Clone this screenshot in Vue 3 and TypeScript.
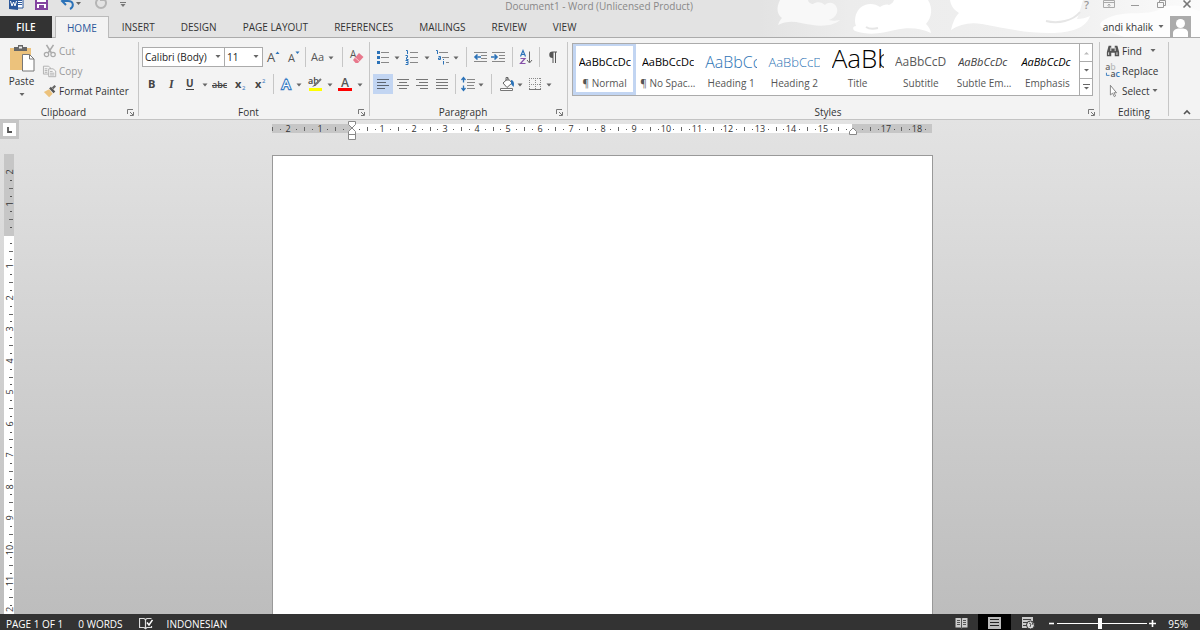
<script setup lang="ts">
import { ref } from 'vue'

interface Tool {
  id: string
  label: string
  w: number
  active?: boolean
}

const icons: Record<string, string> = {
  caret: '<path d="M5.5 7.500h5L8 10.500z" fill="#666"/>',
  grow: '<text x="2" y="13" font-size="13" fill="#555">A</text><path d="M10.500 5l2-2.500 2 2.500z" fill="#2b72b8"/>',
  shrink: '<text x="3" y="13" font-size="11" fill="#555">A</text><path d="M10.500 2.500h4l-2 2.500z" fill="#2b72b8"/>',
  aa: '<text x="1" y="12" font-size="11" fill="#555">Aa</text>',
  eraser: '<text x="1" y="9" font-size="10" fill="#555">A</text><path d="M4 11l6-7 4.500 4L9 14H6.500z" fill="#e8788c"/><path d="M6 8.500l4.500 4" stroke="#f8dde1" stroke-width=".8"/>',
  bold: '<text x="4" y="12" font-size="11" font-weight="700" fill="#444">B</text>',
  italic: '<text x="6" y="12" font-size="12" font-weight="700" font-style="italic" font-family="Liberation Serif" fill="#444">I</text>',
  underline: '<text x="4" y="11" font-size="10" font-weight="700" fill="#444">U</text><path d="M4 13.500h8" stroke="#444"/>',
  strike: '<text x="0" y="12" font-size="9" font-weight="600" fill="#444">abc</text><path d="M0 9.500h15" stroke="#444"/>',
  sub: '<text x="3" y="12" font-size="11" font-weight="700" fill="#444">x</text><text x="10" y="14" font-size="6" fill="#2b72b8">2</text>',
  sup: '<text x="3" y="12" font-size="11" font-weight="700" fill="#444">x</text><text x="10" y="7" font-size="6" fill="#2b72b8">2</text>',
  effects: '<text x="4" y="13" font-size="13" fill="#fff" stroke="#3b7dc4" stroke-width="2.400" paint-order="stroke">A</text>',
  highlight: '<text x="1" y="8" font-size="9" font-weight="600" fill="#444">ab</text><path d="M14 3L8 9" stroke="#777" stroke-width="2"/><path d="M5 11l3-3 1 1.500z" fill="#555"/><path d="M2 12h13v3H2z" fill="#ff0"/>',
  color: '<text x="4" y="11" font-size="12" font-weight="600" fill="#555">A</text><path d="M1 12h14v3H1z" fill="#f00"/>',
  bullets: '<path d="M6 3.500h8M6 8.500h8M6 13.500h8" stroke="#888"/><path d="M2 2h3v3H2zM2 7h3v3H2zM2 12h3v3H2z" fill="#2b72b8"/>',
  numbers: '<path d="M6 3.500h8M6 8.500h8M6 13.500h8" stroke="#888"/><path d="M2 1.500h1.500V5M1.500 6.500h2v2h-1v2h2M1.500 11.500h2.500v4H1.500M2 13.500h2" fill="none" stroke="#2b72b8"/>',
  multi: '<path d="M5 3.500h9M8 8.500h7M12 13.500h3" stroke="#888"/><path d="M2 1.500h1.500V5M4.500 7.500h2v3h-2v-1.500h2M9.500 12v3.500M9.500 10v1" fill="none" stroke="#2b72b8"/>',
  outdent: '<path d="M1 3.500h13M8 6.500h6M8 9.500h6M1 12.500h13" stroke="#888"/><path d="M8 8H2M4.500 5.500L2 8l2.500 2.500" fill="none" stroke="#2b72b8" stroke-width="1.600"/>',
  indent: '<path d="M1 3.500h13M8 6.500h6M8 9.500h6M1 12.500h13" stroke="#888"/><path d="M0 8h6M3.500 5.500L6 8l-2.500 2.500" fill="none" stroke="#2b72b8" stroke-width="1.600"/>',
  sort: '<path d="M2.500 7.500L5 1.500l2.500 6M3.500 5.500h3" fill="none" stroke="#2b72b8" stroke-width="1.200"/><path d="M2.500 9.500H7l-4.500 5h5" fill="none" stroke="#8651a8" stroke-width="1.200"/><path d="M11.500 2.500v11M9 11l2.500 3 2.500-3" fill="none" stroke="#666"/>',
  pilcrow: '<path d="M7.500 9a3 3 0 010-6.500H12v1h-1V14h-1V3.500H8.500V14h-1V9z" fill="#555"/>',
  left: '<path d="M2 3.500h12M2 6.500h9M2 9.500h12M2 12.500h8" stroke="#5c6470"/>',
  center: '<path d="M2 3.500h12M4 6.500h8M2 9.500h12M4 12.500h8" stroke="#777"/>',
  right: '<path d="M2 3.500h12M5 6.500h9M2 9.500h12M6 12.500h8" stroke="#777"/>',
  justify: '<path d="M2 3.500h12M2 6.500h12M2 9.500h12M2 12.500h12" stroke="#777"/>',
  spacing: '<path d="M7 3.500h8M7 6.500h8M7 9.500h7M7 12.500h8" stroke="#888"/><path d="M3.500 2v4.500M3.500 9.500V14M1.500 4l2-2.500 2 2.500M1.500 12l2 2.500 2-2.500" fill="none" stroke="#2b72b8" stroke-width="1.300"/>',
  shading: '<path d="M4 7l5-4.500 4 4.500-5 4.500z" fill="#fff" stroke="#666"/><path d="M7 5V1.500h2V5" fill="none" stroke="#666"/><path d="M12 4c3 0 3.500 4 2.500 7L12 8z" fill="#2b72b8"/><path d="M1.500 12.500h12v2h-12z" fill="#fff" stroke="#777"/>',
  borders: '<path d="M2 2.500h12M2 8.500h12M2.500 2v12M8.500 2v12M13.500 2v12" stroke="#888" stroke-dasharray="1 1" fill="none"/><path d="M2 13.500h12" stroke="#777"/>',
  cut: '<path d="M4 1l5.500 9M12 1L6 10" stroke="#aaa" stroke-width="1.800"/><circle cx="4" cy="12" r="2.500" fill="none" stroke="#aaa" stroke-width="1.400"/><circle cx="11.500" cy="12" r="2.500" fill="none" stroke="#aaa" stroke-width="1.400"/>',
  copy: '<path d="M.5 2.500h6l2 2v7h-8z" fill="#f3f3f3" stroke="#aaa"/><path d="M2 5.500h3M2 7.500h3M2 9.500h3" stroke="#aaa"/><path d="M6.500 5.500h5l3 2.500v6.500h-8z" fill="#f6f6f6" stroke="#aaa"/><path d="M8 8.500h3M8 10.500h5M8 12.500h5" stroke="#aaa"/>',
  painter: '<path d="M1 9l6-3 4 5-4 4z" fill="#ecc27c"/><path d="M7 5l2-2 5 5.500-2 2z" fill="#555"/><path d="M11 5l3-3" stroke="#666" stroke-width="2.500"/>',
  find: '<path d="M3 2h3v3h4V2h3l2 7v5h-5v-4H6v4H1V9z" fill="#555"/><path d="M3 9.500v3M12.500 9.500v3M5.500 4v4M10.500 4v4" stroke="#eee"/>',
  replace: '<text x="-1" y="7" font-size="10" font-weight="600" fill="#666">a<tspan fill="#bbb">b</tspan></text><text x="5" y="15" font-size="10" font-weight="600" fill="#555">a<tspan fill="#2b72b8">c</tspan></text><path d="M.5 10v3H4" fill="none" stroke="#2b72b8"/>',
  select: '<path d="M5 1.500v11l2.500-2 2 4 1.500-1-2-3.500H12z" fill="#fff" stroke="#777"/>',
}

const fontRow1: Tool[] = [
  { id: 'grow', label: 'Increase font size', w: 20 },
  { id: 'shrink', label: 'Decrease font size', w: 19 },
  { id: '|', label: '', w: 6 },
  { id: 'aa', label: 'Change case', w: 19 },
  { id: 'caret', label: 'Change case options', w: 8 },
  { id: '|', label: '', w: 14 },
  { id: 'eraser', label: 'Clear formatting', w: 15 },
]
const fontRow2: Tool[] = [
  { id: 'bold', label: 'Bold', w: 19 },
  { id: 'italic', label: 'Italic', w: 19 },
  { id: 'underline', label: 'Underline', w: 20 },
  { id: 'caret', label: 'Underline style', w: 10 },
  { id: 'strike', label: 'Strikethrough', w: 20 },
  { id: 'sub', label: 'Subscript', w: 20 },
  { id: 'sup', label: 'Superscript', w: 19 },
  { id: '|', label: '', w: 8 },
  { id: 'effects', label: 'Text effects', w: 18 },
  { id: 'caret', label: 'Text effect options', w: 8 },
  { id: 'highlight', label: 'Highlight colour', w: 23 },
  { id: 'caret', label: 'Highlight colour options', w: 8 },
  { id: 'color', label: 'Font colour', w: 22 },
  { id: 'caret', label: 'Font colour options', w: 8 },
]
const paraRow1: Tool[] = [
  { id: 'bullets', label: 'Bullets', w: 20 },
  { id: 'caret', label: 'Bullet options', w: 8 },
  { id: 'numbers', label: 'Numbering', w: 22 },
  { id: 'caret', label: 'Numbering options', w: 8 },
  { id: 'multi', label: 'Multilevel list', w: 21 },
  { id: 'caret', label: 'Multilevel list options', w: 8 },
  { id: '|', label: '', w: 12 },
  { id: 'outdent', label: 'Decrease indent', w: 18 },
  { id: 'indent', label: 'Increase indent', w: 18 },
  { id: '|', label: '', w: 9 },
  { id: 'sort', label: 'Sort', w: 18 },
  { id: '|', label: '', w: 8 },
  { id: 'pilcrow', label: 'Show formatting marks', w: 20 },
]
const paraRow2: Tool[] = [
  { id: 'left', label: 'Align left', w: 20, active: true },
  { id: 'center', label: 'Centre', w: 19 },
  { id: 'right', label: 'Align right', w: 20 },
  { id: 'justify', label: 'Justify', w: 20 },
  { id: '|', label: '', w: 6 },
  { id: 'spacing', label: 'Line spacing', w: 19 },
  { id: 'caret', label: 'Line spacing options', w: 8 },
  { id: '|', label: '', w: 12 },
  { id: 'shading', label: 'Shading', w: 19 },
  { id: 'caret', label: 'Shading options', w: 8 },
  { id: 'borders', label: 'Borders', w: 21 },
  { id: 'caret', label: 'Border options', w: 8 },
]

const tabs = ['HOME', 'INSERT', 'DESIGN', 'PAGE LAYOUT', 'REFERENCES', 'MAILINGS', 'REVIEW', 'VIEW']

const styles = [
  { name: '¶ Normal', sample: 'AaBbCcDc', cls: 'normal' },
  { name: '¶ No Spac...', sample: 'AaBbCcDc', cls: 'normal' },
  { name: 'Heading 1', sample: 'AaBbCc', cls: 'h1' },
  { name: 'Heading 2', sample: 'AaBbCcD', cls: 'h2' },
  { name: 'Title', sample: 'AaBb', cls: 'title' },
  { name: 'Subtitle', sample: 'AaBbCcD', cls: 'subtitle' },
  { name: 'Subtle Em...', sample: 'AaBbCcDc', cls: 'subtle' },
  { name: 'Emphasis', sample: 'AaBbCcDc', cls: 'emphasis' },
]

const UNIT = 31.45

interface Mark {
  pos: number
  kind: 'num' | 'half' | 'dot'
  text: string
}

function marks(from: number, to: number, skip: number[]): Mark[] {
  const list: Mark[] = []
  for (let q = from; q <= to; q++) {
    if (q === 0 || skip.includes(q)) continue
    const pos = Math.round((q * UNIT) / 4)
    if (q % 4 === 0) list.push({ pos, kind: 'num', text: String(Math.abs(q / 4)) })
    else list.push({ pos, kind: q % 2 === 0 ? 'half' : 'dot', text: '' })
  }
  return list
}

const hMarks = marks(-10, 73, [64])
const vMarks = marks(-8, 48, [])
const zoomLevel = ref(95)
const fontName = ref('Calibri (Body)')
const fontSize = ref('11')
</script>

<template>
  <div class="word">
    <header class="top">
      <svg class="clouds" viewBox="0 0 440 37" aria-hidden="true">
        <defs>
          <linearGradient id="fade"><stop offset="0" stop-color="#e3e3e3" /><stop offset=".2" stop-color="#ececec" /><stop offset=".7" stop-color="#f0f0f0" /><stop offset="1" stop-color="#fbfbfb" /></linearGradient>
        </defs>
        <path d="M0 0h440v37H0z" fill="url(#fade)" />
        <path fill="#f8f8f8" d="M20 0C16 8 17 14 22 18c-2 2-3 4-4 7 8-4 15-4 23-2 14 3 30 5 39-3-5 1-8 1-11 0 8-3 10-9 7-14-3-4-8-4-11-1-3-3-8-4-12-1-2 0-5-2-5-4z" />
        <path fill="#fff" d="M134 0c-1 3-3 4-5 5-3-1-6 0-9 2-6-4-14-4-20 1-5 5-6 13-4 18-3 0-4 3-1 5 15 5 28 2 40-1 13-3 26-2 36 3-1-5-3-7-5-9 6-7 7-16 2-24z" />
        <path fill="#fff" d="M190 0c1 6 4 10 9 13-4 4-6 9-8 17 9-6 19-8 31-6 23 4 42 9 68 9 21 0 36-5 40-17-4 2-8 3-13 3 2-5 4-12 6-19z" />
        <path d="M106 27c3 2 8 2 12 1M286 21c12 3 27 0 34-9" fill="none" stroke="#e6e6e6" stroke-width="2" />
        <path fill="#fdfdfd" d="M344 20c20-12 42-2 58-12 13-6 28 0 38 3v26h-75c-20-6-31-11-21-17z" />
      </svg>
      <div class="titlebar">
        <div class="quick">
          <svg width="15" height="14" viewBox="0 0 15 14"><path d="M7 1h7v11H7z" fill="#fff" stroke="#2b579a" /><path d="M9 4.500h4M9 6.500h4M9 8.500h4" stroke="#2b579a" /><path d="M0 1l9-1v14l-9-1z" fill="#2b579a" /><path d="M1.500 5l1.500 5 1.500-4L6 10l1.500-5" fill="none" stroke="#fff" /></svg>
          <button type="button" aria-label="Save"><svg width="13" height="14" viewBox="0 0 13 14"><path d="M1 0h11v13H1z" fill="#fff" stroke="#8443a0" stroke-width="2" /><path d="M2 7h9" stroke="#8443a0" stroke-width="2" /><path d="M4 9h5v4H4z" fill="#8443a0" /></svg></button>
          <button type="button" class="undo" aria-label="Undo"><svg width="22" height="14" viewBox="0 0 22 14"><path d="M2 5h6c6 0 6 6 2 8M6 1L2 5l4 4" fill="none" stroke="#2b72b8" stroke-width="2" /><path d="M16 6h5l-2.500 3z" fill="#666" /></svg></button>
          <button type="button" class="redo" aria-label="Repeat"><svg width="14" height="14" viewBox="0 0 14 14"><path d="M4 3a5 5 0 106 0M10 0v4H6" fill="none" stroke="#b5b5b5" stroke-width="2" /></svg></button>
          <button type="button" class="more" aria-label="Customise toolbar"><svg width="6" height="14" viewBox="0 0 6 14"><path d="M0 6.500h6" stroke="#777" /><path d="M.5 8h5L3 11z" fill="#777" /></svg></button>
        </div>
        <div class="doc-title">Document1 - Word (Unlicensed Product)</div>
        <div class="window-tools">
          <button type="button" aria-label="Help" class="help">?</button>
          <button type="button" aria-label="Ribbon display options"><svg width="12" height="12" viewBox="0 0 12 12"><path d="M.5 .5h11v7H.5zM1 2.500h10M6 7V4M4.500 5.500L6 4l1.500 1.500" fill="none" stroke="#aaa" /></svg></button>
          <button type="button" aria-label="Minimise"><svg width="12" height="12" viewBox="0 0 12 12"><path d="M2 5.500h8" stroke="#999" /></svg></button>
          <button type="button" aria-label="Restore"><svg width="12" height="12" viewBox="0 0 12 12"><path d="M2.500 2.500h6v5h-6zM4.500 2V.5h6v5H9" fill="none" stroke="#999" /></svg></button>
          <button type="button" aria-label="Close"><svg width="12" height="12" viewBox="0 0 12 12"><path d="M2.500 .5l7 7M9.500 .5l-7 7" stroke="#777" stroke-width="1.600" /></svg></button>
        </div>
      </div>
      <nav class="tabs">
        <button type="button" class="file">FILE</button>
        <button v-for="(t, i) in tabs" :key="t" type="button" class="tab" :class="{ current: i === 0 }">{{ t }}</button>
        <button type="button" class="account">andi khalik <svg width="6" height="4" viewBox="0 0 6 4"><path d="M.5 0h5L3 3z" fill="#666" /></svg></button>
        <svg class="avatar" width="21" height="21" viewBox="0 0 21 21"><path d="M0 0h21v21H0z" fill="#ababab" /><circle cx="10.500" cy="7.500" r="4.500" fill="#fff" /><path d="M3 21v-4c0-3 3-4 5-4.500h5c3 .5 5 1.500 5 4.500v4z" fill="#fff" /></svg>
      </nav>
    </header>

    <section class="ribbon">
      <div class="group clipboard">
        <div class="body">
          <button type="button" class="paste">
            <svg width="26" height="28" viewBox="0 0 26 28"><path d="M1 4h21v22H1z" fill="#ecc27c" /><path d="M5 3h4V1h5v2h4v4H5z" fill="#666" /><path d="M10 2.500h3v2h-3z" fill="#eee" /><path d="M13.500 10.500h7l4.500 4.500v12H13.500z" fill="#fff" stroke="#777" /><path d="M20.500 10.500V15H25" fill="none" stroke="#777" /></svg>
            <span>Paste</span>
            <svg width="6" height="4" viewBox="0 0 6 4"><path d="M.5 0h5L3 3z" fill="#666" /></svg>
          </button>
          <div class="stack">
            <button type="button" class="dim"><svg width="14" height="14" viewBox="0 0 16 16" v-html="icons.cut" />Cut</button>
            <button type="button" class="dim"><svg width="14" height="14" viewBox="0 0 16 16" v-html="icons.copy" />Copy</button>
            <button type="button"><svg width="14" height="14" viewBox="0 0 16 16" v-html="icons.painter" />Format Painter</button>
          </div>
        </div>
        <footer><span>Clipboard</span><button type="button" class="launch" aria-label="Clipboard settings"><svg width="7" height="7" viewBox="0 0 7 7"><path d="M.5 5V.5H6M3 3l3 3M6.500 3v3.500H3" fill="none" stroke="#777" /></svg></button></footer>
      </div>

      <div class="group font">
        <div class="rows">
          <div class="row">
            <label class="combo name"><select v-model="fontName" aria-label="Font"><option>Calibri (Body)</option></select><svg width="6" height="4" viewBox="0 0 6 4"><path d="M.5 0h5L3 3z" fill="#666" /></svg></label>
            <label class="combo size"><select v-model="fontSize" aria-label="Font size"><option>11</option></select><svg width="6" height="4" viewBox="0 0 6 4"><path d="M.5 0h5L3 3z" fill="#666" /></svg></label>
            <template v-for="(t, i) in fontRow1" :key="i">
              <i v-if="t.id === '|'" class="sep" :style="{ width: t.w + 'px' }" />
              <button v-else type="button" class="tool" :aria-label="t.label" :style="{ width: t.w + 'px' }"><svg width="16" height="16" viewBox="0 0 16 16" v-html="icons[t.id]" /></button>
            </template>
          </div>
          <div class="row">
            <template v-for="(t, i) in fontRow2" :key="i">
              <i v-if="t.id === '|'" class="sep" :style="{ width: t.w + 'px' }" />
              <button v-else type="button" class="tool" :aria-label="t.label" :style="{ width: t.w + 'px' }"><svg width="16" height="16" viewBox="0 0 16 16" v-html="icons[t.id]" /></button>
            </template>
          </div>
        </div>
        <footer><span>Font</span><button type="button" class="launch" aria-label="Font settings"><svg width="7" height="7" viewBox="0 0 7 7"><path d="M.5 5V.5H6M3 3l3 3M6.500 3v3.500H3" fill="none" stroke="#777" /></svg></button></footer>
      </div>

      <div class="group paragraph">
        <div class="rows">
          <div v-for="(r, k) in [paraRow1, paraRow2]" :key="k" class="row">
            <template v-for="(t, i) in r" :key="i">
              <i v-if="t.id === '|'" class="sep" :style="{ width: t.w + 'px' }" />
              <button v-else type="button" class="tool" :class="{ active: t.active }" :aria-label="t.label" :style="{ width: t.w + 'px' }"><svg width="16" height="16" viewBox="0 0 16 16" v-html="icons[t.id]" /></button>
            </template>
          </div>
        </div>
        <footer><span>Paragraph</span><button type="button" class="launch" aria-label="Paragraph settings"><svg width="7" height="7" viewBox="0 0 7 7"><path d="M.5 5V.5H6M3 3l3 3M6.500 3v3.500H3" fill="none" stroke="#777" /></svg></button></footer>
      </div>

      <div class="group styles">
        <div class="gallery">
          <button v-for="(s, i) in styles" :key="s.name" type="button" class="style" :class="{ chosen: i === 0 }">
            <span class="sample" :class="s.cls">{{ s.sample }}</span>
            <span class="style-name">{{ s.name }}</span>
          </button>
          <div class="scroller">
            <button type="button" aria-label="Previous styles"><svg width="7" height="6" viewBox="0 0 7 6"><path d="M1 4.500h5L3.500 2z" fill="#bbb" /></svg></button>
            <button type="button" aria-label="Next styles"><svg width="7" height="6" viewBox="0 0 7 6"><path d="M1 2h5L3.500 4.500z" fill="#666" /></svg></button>
            <button type="button" aria-label="All styles"><svg width="7" height="6" viewBox="0 0 7 6"><path d="M0 .5h7" stroke="#666" /><path d="M1 3h5L3.500 5.500z" fill="#666" /></svg></button>
          </div>
        </div>
        <footer><span>Styles</span><button type="button" class="launch" aria-label="Style settings"><svg width="7" height="7" viewBox="0 0 7 7"><path d="M.5 5V.5H6M3 3l3 3M6.500 3v3.500H3" fill="none" stroke="#777" /></svg></button></footer>
      </div>

      <div class="group editing">
        <div class="stack">
          <button type="button"><svg width="14" height="14" viewBox="0 0 16 16" v-html="icons.find" />Find<svg class="gap" width="6" height="4" viewBox="0 0 6 4"><path d="M.5 0h5L3 3z" fill="#666" /></svg></button>
          <button type="button"><svg width="14" height="14" viewBox="0 0 16 16" v-html="icons.replace" />Replace</button>
          <button type="button"><svg width="14" height="14" viewBox="0 0 16 16" v-html="icons.select" />Select<svg width="6" height="4" viewBox="0 0 6 4"><path d="M.5 0h5L3 3z" fill="#666" /></svg></button>
        </div>
        <footer><span>Editing</span></footer>
      </div>
      <button type="button" class="collapse" aria-label="Collapse the ribbon"><svg width="8" height="6" viewBox="0 0 8 6"><path d="M1 5l3-3 3 3" fill="none" stroke="#555" stroke-width="1.600" /></svg></button>
    </section>

    <main class="work">
      <div class="side">
        <button type="button" class="tabstop" aria-label="Tab selector"><svg width="13" height="13" viewBox="0 0 13 13"><path d="M0 0h13v13H0z" fill="#fff" /><path d="M5 4v5h4" fill="none" stroke="#555" stroke-width="1.800" /></svg></button>
        <svg class="vruler" width="10" height="462" viewBox="0 0 10 462">
          <path d="M0 0h10v462H0z" fill="#fff" /><path d="M0 0h10v82H0z" fill="#c6c6c6" />
          <g transform="translate(0 81)">
            <template v-for="m in vMarks" :key="m.pos">
              <text v-if="m.kind === 'num'" :transform="`translate(9 ${m.pos}) rotate(-90)`" text-anchor="middle">{{ m.text }}</text>
              <path v-else-if="m.kind === 'half'" :d="`M5 ${m.pos + 0.5}h4`" stroke="#666" />
              <path v-else :d="`M6 ${m.pos + 0.5}h2`" stroke="#555" />
            </template>
          </g>
        </svg>
      </div>
      <div class="canvas">
        <svg class="hruler" width="662" height="20" viewBox="0 0 662 20">
          <path d="M0 4h660v9H0z" fill="#c6c6c6" /><path d="M80 4h500v9H80z" fill="#fff" />
          <g transform="translate(79 0)">
            <template v-for="m in hMarks" :key="m.pos">
              <text v-if="m.kind === 'num'" :x="m.pos" y="12" text-anchor="middle">{{ m.text }}</text>
              <path v-else-if="m.kind === 'half'" :d="`M${m.pos + 0.5} 7v4`" stroke="#666" />
              <path v-else :d="`M${m.pos} 9.500h1`" stroke="#555" />
            </template>
          </g>
          <path d="M76.500 1.500h7v3L80 8l3.500 3.500v8h-7v-8L80 8l-3.500-3.500zM76.500 14.500h7" fill="#fff" stroke="#888" />
          <path d="M577.500 14.500v-3L581 8l3.500 3.500v3z" fill="#fff" stroke="#888" />
        </svg>
        <article class="page" aria-label="Document page"></article>
      </div>
    </main>

    <footer class="status">
      <span class="pages">PAGE 1 OF 1</span>
      <span class="words">0 WORDS</span>
      <svg class="proof" width="14" height="13" viewBox="0 0 14 13"><path d="M6.500 11V2.500L5 1.500H.5v9H5l1.500 1.200L8 10.500h4.500V9M6.500 2.500L8 1.500h4.500" fill="none" stroke="#ddd" stroke-width="1.200" /><path d="M8 5.500l2 2.500 3.500-5" fill="none" stroke="#fff" stroke-width="1.500" /></svg>
      <span>INDONESIAN</span>
      <div class="views">
        <button type="button" aria-label="Read mode"><svg width="13" height="12" viewBox="0 0 13 12"><path d="M.5 1h5l1 1 1-1h5v9.500h-5l-1 1-1-1h-5z" fill="#ccc" /><path d="M6.500 1v10M2 3.500h3M2 5.500h3M2 7.500h3M8 3.500h3M8 5.500h3M8 7.500h3" stroke="#555" /></svg></button>
        <button type="button" class="on" aria-label="Print layout"><svg width="13" height="12" viewBox="0 0 13 12"><path d="M0 0h13v12H0z" fill="#bbb" /><path d="M2 2.500h9M2 5.500h9M2 8.500h9" stroke="#222" /></svg></button>
        <button type="button" aria-label="Web layout"><svg width="14" height="12" viewBox="0 0 14 12"><path d="M1 0h11v11H1z" fill="#ccc" /><path d="M2 2.500h8M2 5.500h5M2 8.500h4" stroke="#444" /><circle cx="9.500" cy="8" r="4" fill="#ddd" stroke="#333" /><path d="M8 6l2 1-1 3M11 5l1 3" fill="none" stroke="#555" /></svg></button>
      </div>
      <div class="zoom">
        <button type="button" aria-label="Zoom out"><svg width="7" height="7" viewBox="0 0 7 7"><path d="M1 3.500h5" stroke="#fff" stroke-width="1.600" /></svg></button>
        <input v-model.number="zoomLevel" type="range" min="10" max="190" aria-label="Zoom" />
        <button type="button" aria-label="Zoom in"><svg width="7" height="7" viewBox="0 0 7 7"><path d="M0 3.500h7M3.500 0v7" stroke="#fff" stroke-width="1.600" /></svg></button>
        <output>{{ zoomLevel }}%</output>
      </div>
    </footer>
  </div>
</template>

<style>
html,
body {
  height: 100%;
  overflow: hidden;
}
</style>

<style scoped>
.word {
  display: flex;
  flex-direction: column;
  height: 100vh;
  overflow: hidden;
  font: 10px/14px 'Open Sans', 'Noto Sans', sans-serif;
  color: #333;
}
.word *,
.word *::before {
  box-sizing: border-box;
}
button {
  padding: 0;
  border: 0;
  background: none;
  color: inherit;
  font: inherit;
}
svg {
  display: block;
  flex: none;
}
.top {
  position: relative;
  flex: none;
  height: 38px;
  background: #e3e3e3;
  border-bottom: 1px solid #ababab;
}
.clouds {
  position: absolute;
  top: 0;
  right: 0;
  width: 440px;
  height: 37px;
}
.titlebar,
.tabs {
  position: relative;
  display: flex;
}
.titlebar {
  height: 16px;
  align-items: flex-start;
  justify-content: space-between;
}
.quick {
  display: flex;
  width: 240px;
  height: 10px;
  padding-left: 9px;
  align-items: flex-end;
}
.quick button {
  margin-left: 11px;
}
.quick .undo {
  margin-left: 12px;
}
.quick .redo {
  margin-left: 12px;
}
.quick .more {
  margin-left: 12px;
}
.doc-title {
  line-height: 12px;
  color: #888;
}
.window-tools {
  display: flex;
  width: 242px;
  padding-right: 7px;
  gap: 14px;
  justify-content: flex-end;
  align-items: flex-start;
}
.help {
  font-size: 11px;
  font-weight: 600;
  line-height: 10px;
  color: #999;
}
.tabs {
  height: 22px;
}
.file {
  width: 52px;
  background: #333;
  color: #fff;
  height: 22px;
  font-weight: 600;
}
.tab {
  padding: 0 13px;
}
.tab.current {
  margin-left: 3px;
  padding: 0 11px;
  background: #f3f3f3;
  border: 1px solid #bbb;
  border-bottom: 0;
  color: #2b579a;
}
.account {
  display: flex;
  align-items: center;
  gap: 5px;
  margin-left: auto;
}
.avatar {
  margin: 0 9px 0 6px;
}
.ribbon {
  display: flex;
  flex: none;
  height: 82px;
  padding-top: 4px;
  background: #f3f3f3;
  border-bottom: 1px solid #c3c3c3;
}
.group {
  display: flex;
  flex: none;
  flex-direction: column;
  justify-content: space-between;
  height: 74px;
  border-right: 1px solid #c6c6c6;
}
.group footer {
  display: flex;
  height: 14px;
  align-items: center;
  margin-bottom: -3px;
}
.group footer span {
  flex: 1;
  text-align: center;
}
.launch {
  margin-right: 4px;
}
.clipboard {
  width: 139px;
}
.font {
  width: 231px;
}
.paragraph {
  width: 198px;
}
.group.styles {
  flex: 1;
}
.editing {
  width: 69px;
}
.body {
  display: flex;
}
.paste {
  display: flex;
  flex-direction: column;
  align-items: center;
  width: 43px;
  padding-top: 2px;
}
.paste span {
  margin: 2px 0 5px;
}
.stack {
  display: flex;
  flex-direction: column;
  margin-top: -1px;
}
.stack button {
  display: flex;
  align-items: center;
  gap: 2px;
  height: 20px;
}
.dim {
  color: #999;
}
.rows {
  display: flex;
  flex-direction: column;
  gap: 7px;
  padding: 5px 0 0 3px;
}
.row {
  display: flex;
  height: 20px;
}
.tool {
  display: flex;
  justify-content: center;
  align-items: center;
  height: 20px;
}
.tool svg {
  overflow: visible;
}
.tool.active {
  background: #c2d5f2;
}
.sep {
  display: flex;
  justify-content: center;
}
.sep::before {
  content: '';
  width: 1px;
  background: #c6c6c6;
}
.combo {
  display: flex;
  align-items: center;
  padding-right: 3px;
  background: #fff;
  border: 1px solid #ababab;
}
.combo.name {
  width: 83px;
}
.combo.size {
  width: 38px;
  border-left: 0;
}
.combo select {
  flex: 1;
  min-width: 0;
  padding: 0 2px;
  border: 0;
  appearance: none;
  background: none;
  color: #222;
  font: inherit;
}
.gallery {
  display: flex;
  height: 53px;
  margin: 1px 6px 0 4px;
  background: #fff;
  border: 1px solid #ababab;
}
.style {
  display: flex;
  flex: 1;
  flex-direction: column;
  align-items: center;
  min-width: 0;
  padding-top: 2px;
  border: 3px solid transparent;
  border-top-width: 2px;
}
.style.chosen {
  border-color: #c2d5f2;
}
.sample {
  display: flex;
  width: 52px;
  height: 28px;
  align-items: center;
  overflow: hidden;
  white-space: nowrap;
  color: #000;
  font-size: 11px;
}
.style-name {
  white-space: nowrap;
  color: #555;
}
.sample.h1,
.sample.h2 {
  color: #2e74b5;
  font-weight: 300;
}
.sample.h1 {
  font-size: 16px;
}
.sample.h2 {
  font-size: 13px;
}
.sample.title {
  font-size: 26px;
  font-weight: 300;
  line-height: 20px;
  align-items: flex-start;
}
.sample.subtitle {
  font-size: 12px;
  color: #5a5a5a;
}
.sample.subtle {
  font-style: italic;
  color: #404040;
}
.sample.emphasis {
  font-style: italic;
}
.scroller {
  display: grid;
  grid-template-rows: 1fr 1fr 1fr;
  width: 13px;
  border-left: 1px solid #ababab;
}
.scroller button {
  display: flex;
  align-items: center;
  justify-content: center;
}
.scroller button + button {
  border-top: 1px solid #ababab;
}
.editing .stack {
  padding-left: 6px;
}
.stack svg {
  overflow: visible;
}
.gap {
  margin-left: 6px;
}
.collapse {
  display: flex;
  flex: none;
  align-self: flex-end;
  justify-content: center;
  width: 31px;
  padding: 0 0 4px 5px;
}
.work {
  display: flex;
  flex: 1;
  min-height: 0;
  overflow: hidden;
  background: linear-gradient(#e3e3e3, #bdbdbd);
}
.side {
  flex: none;
  width: 20px;
}
.tabstop {
  display: block;
  padding: 3px;
  background: #c6c6c6;
}
.vruler {
  margin: 15px 0 0 4px;
}
.vruler text,
.hruler text {
  fill: #333;
  font-size: 9px;
}
.canvas {
  display: flex;
  flex: 1;
  flex-direction: column;
  align-items: center;
  padding-right: 15px;
}
.page {
  flex: 1;
  width: 661px;
  margin-top: 15px;
  background: #fff;
  border: 1px solid #999;
  border-bottom: 0;
}
.status {
  display: flex;
  flex: none;
  align-items: center;
  height: 16px;
  padding: 3px 12px 0 6px;
  background: #333;
  color: #fff;
}
.words {
  margin-left: 15px;
}
.proof {
  margin: 0 14px 0 16px;
}
.views {
  display: flex;
  align-self: stretch;
  margin: -3px 0 0 auto;
}
.views button {
  display: flex;
  width: 33px;
  align-items: center;
  justify-content: center;
  padding-top: 2px;
}
.views .on {
  background: #000;
}
.zoom {
  display: flex;
  align-items: center;
  margin-left: 4px;
}
.zoom input {
  width: 90px;
  height: 12px;
  margin: 0 2px;
  appearance: none;
  background: linear-gradient(#fff, #fff) center / 100% 1px no-repeat;
}
.zoom input::-webkit-slider-thumb {
  appearance: none;
  width: 4px;
  height: 11px;
  background: #fff;
}
.zoom output {
  margin-left: 12px;
}
</style>
